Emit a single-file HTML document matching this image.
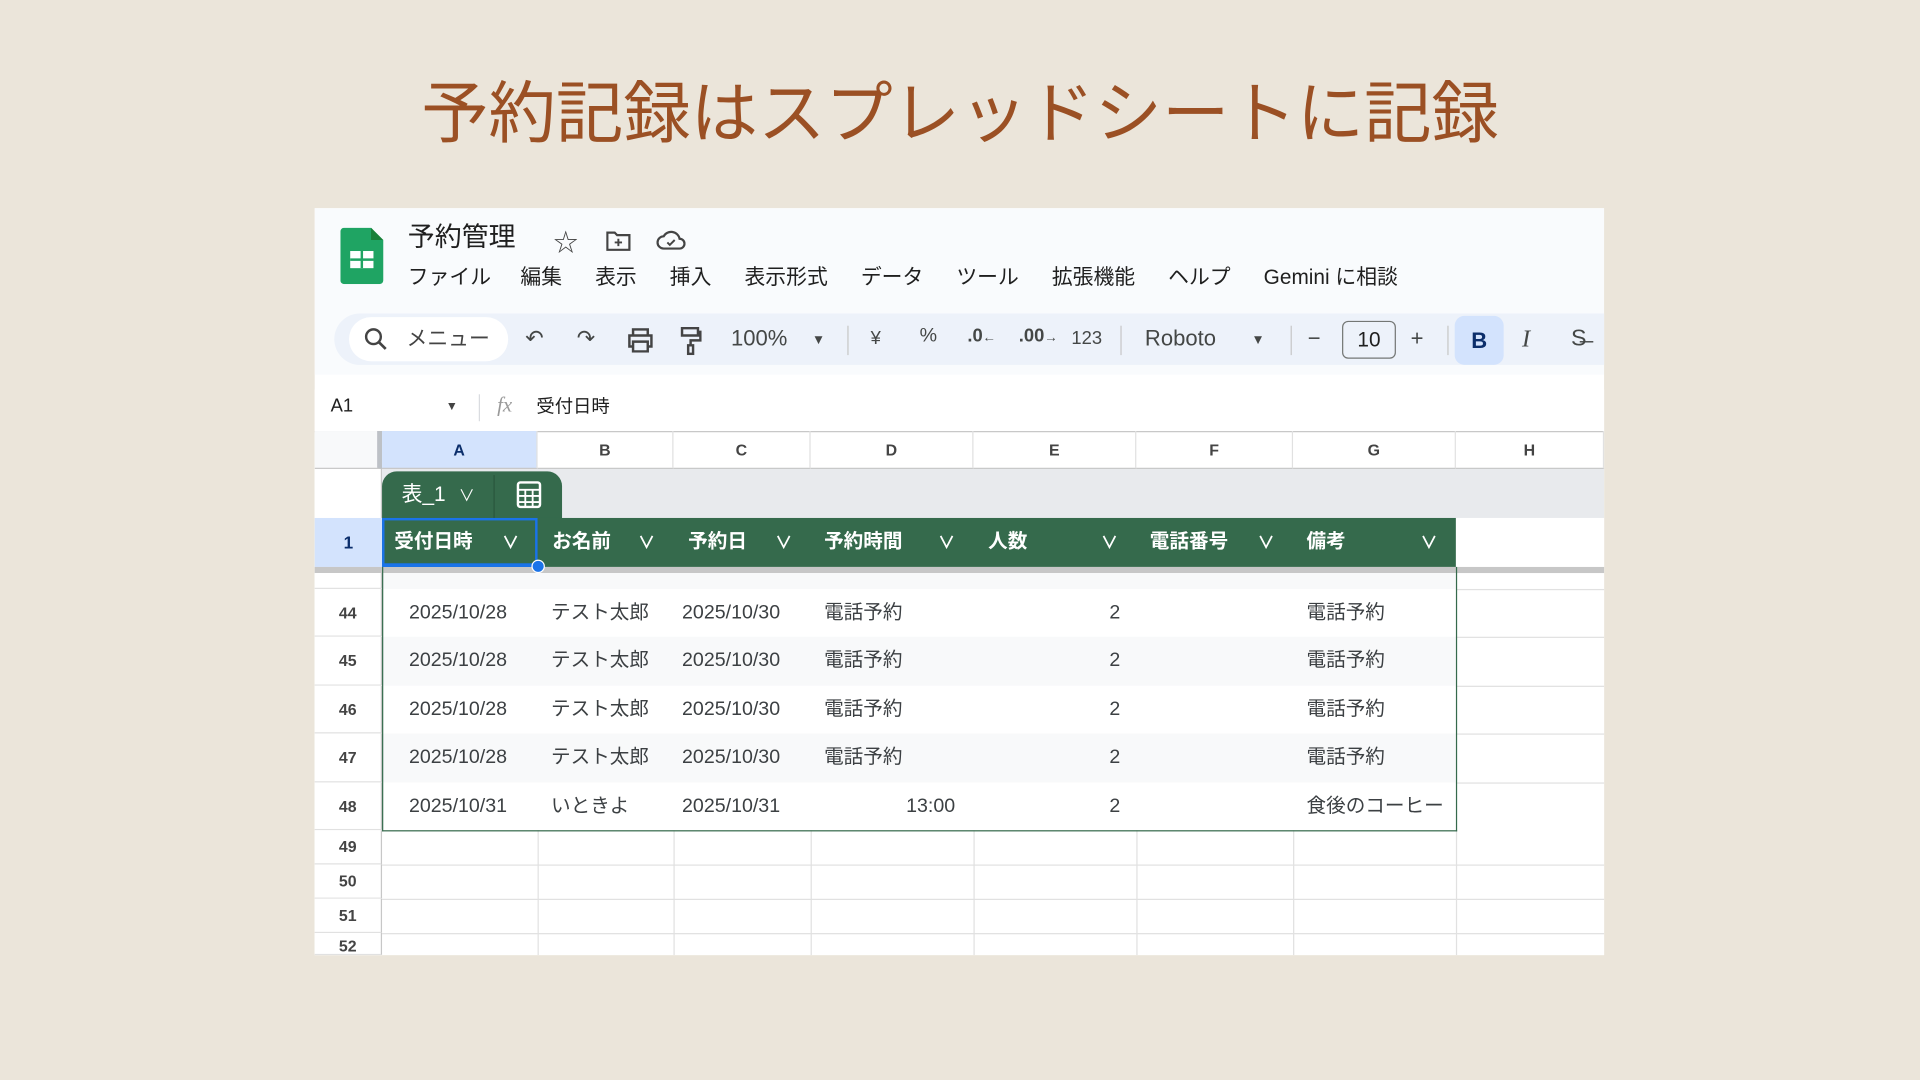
<!DOCTYPE html>
<html><head><meta charset="utf-8"><style>
*{margin:0;padding:0;box-sizing:border-box}
html,body{width:1920px;height:1080px;overflow:hidden;background:#ebe5da}
#w{position:absolute;left:0;top:0;width:1568px;height:882px;transform:scale(1.22449);transform-origin:0 0;font-family:"Liberation Sans","Noto Sans CJK JP",sans-serif;color:#3c4043}
.a{position:absolute;white-space:nowrap}
h1{position:absolute;left:0;width:1568px;top:48px;text-align:center;font-weight:400;font-size:55px;color:#9b5024;font-family:"Liberation Sans","Noto Sans CJK JP",sans-serif}
#sh{position:absolute;left:257px;top:170px;width:1053px;height:610px;background:#fff;overflow:hidden}
.menu span{margin-right:27px}
.tb{font-size:18px;color:#444746;position:absolute;top:266px}
.col{position:absolute;top:182px;height:31px;border-right:1px solid #e1e1e1;border-bottom:1px solid #c7c7c7;font-size:13px;font-weight:700;text-align:center;line-height:31px;color:#444}
.hrow{position:absolute;left:257px;width:55px;border-right:1px solid #c7c7c7;border-bottom:1px solid #e1e1e1;font-size:13px;font-weight:700;text-align:center;color:#444;background:#fff}
.hd{position:absolute;height:40px;line-height:40px;color:#fff;font-weight:700;font-size:16px}
.cell{position:absolute;font-size:16px;color:#3c4043;line-height:20px;white-space:nowrap}
.vl{position:absolute;width:1px;background:#e1e1e1}
.hl{position:absolute;height:1px;background:#e1e1e1}
</style></head><body><div id="w">
<h1>予約記録はスプレッドシートに記録</h1>
<div id="sh">
 <div class="a" style="left:0;top:0;width:1053px;height:136px;background:#f9fbfd"></div>
 <svg class="a" style="left:21px;top:16px" width="36" height="46" viewBox="0 0 36 46"><path d="M3 0H25L35 10V43a3 3 0 0 1-3 3H3a3 3 0 0 1-3-3V3a3 3 0 0 1 3-3z" fill="#1fa463"/><path d="M25 0L35 10H25z" fill="#188038"/><rect x="8" y="19" width="19" height="14" fill="#fff"/><path d="M8 26H27M17.5 19V33" stroke="#1fa463" stroke-width="2"/></svg>
 <div class="a" style="left:76px;top:9px;font-size:22px;color:#1f1f1f;line-height:30px">予約管理</div>
 <div class="a" style="left:195px;top:12px;font-size:20px;color:#444">☆</div>
 <svg class="a" style="left:238px;top:18px" width="20" height="17" viewBox="0 0 20 17"><path d="M1 2h6l2 2h10v12H1z" fill="none" stroke="#444" stroke-width="1.8"/><path d="M10 7v6M7 10h6" stroke="#444" stroke-width="1.6"/></svg>
 <svg class="a" style="left:279px;top:18px" width="24" height="17" viewBox="0 0 24 17"><path d="M6 15a5 5 0 0 1 0-10 7 7 0 0 1 13 2 4 4 0 0 1 0 8z" fill="none" stroke="#444" stroke-width="1.8"/><path d="M9 10l2 2 4-4" fill="none" stroke="#444" stroke-width="1.6"/></svg>
 <div class="a menu" style="left:76px;top:47px;font-size:17px;color:#1f1f1f;line-height:20px"><span style="margin-right:24px">ファイル</span><span>編集</span><span>表示</span><span>挿入</span><span>表示形式</span><span>データ</span><span>ツール</span><span>拡張機能</span><span>ヘルプ</span><span>Gemini に相談</span></div>
 <div class="a" style="left:16px;top:86px;width:1060px;height:42px;border-radius:21px;background:#edf2fa"></div>
 <div class="a" style="left:28px;top:89px;width:130px;height:36px;border-radius:18px;background:#fff"></div>
 <svg class="a" style="left:40px;top:97px" width="20" height="20" viewBox="0 0 20 20"><circle cx="8" cy="8" r="6" fill="none" stroke="#444" stroke-width="2"/><path d="M12.5 12.5L18 18" stroke="#444" stroke-width="2.2"/></svg>
 <div class="a" style="left:75px;top:97px;font-size:17px;color:#444;line-height:20px">メニュー</div>
</div>
<div class="tb" style="left:429px">↶</div><div class="tb" style="left:471px">↷</div>
<svg class="a" style="left:512px;top:268px" width="22" height="20" viewBox="0 0 22 20"><path d="M5 6V1h12v5M5 15H2V6h18v9h-3M5 11h12v8H5z" fill="none" stroke="#444" stroke-width="2"/></svg>
<svg class="a" style="left:555px;top:266px" width="18" height="24" viewBox="0 0 18 24"><path d="M2 2h13v6H2zM15 5h2v7H9v4M7 16h4v7H7z" fill="none" stroke="#444" stroke-width="2"/></svg>
<div class="tb" style="left:597px">100%</div><div class="tb" style="left:663px;font-size:11px;top:272px">▼</div>
<div class="a" style="left:692px;top:266px;width:1px;height:24px;background:#c7c7c7"></div>
<div class="tb" style="left:711px;font-size:15px;top:268px">¥</div><div class="tb" style="left:751px;font-size:16px">%</div>
<div class="tb" style="left:790px;font-size:15px;font-weight:700;top:266px">.0<span style="font-size:11px">←</span></div>
<div class="tb" style="left:832px;font-size:15px;font-weight:700;top:266px">.00<span style="font-size:11px">→</span></div>
<div class="tb" style="left:875px;font-size:15px;top:268px">123</div>
<div class="a" style="left:915px;top:266px;width:1px;height:24px;background:#c7c7c7"></div>
<div class="tb" style="left:935px">Roboto</div><div class="tb" style="left:1022px;font-size:11px;top:272px">▼</div>
<div class="a" style="left:1054px;top:266px;width:1px;height:24px;background:#c7c7c7"></div>
<div class="tb" style="left:1068px">−</div>
<div class="a" style="left:1096px;top:262px;width:44px;height:31px;border:1px solid #747775;border-radius:5px;text-align:center;line-height:29px;font-size:17px;color:#1f1f1f">10</div>
<div class="tb" style="left:1152px">+</div>
<div class="a" style="left:1182px;top:266px;width:1px;height:24px;background:#c7c7c7"></div>
<div class="a" style="left:1188px;top:258px;width:40px;height:40px;border-radius:8px;background:#d3e3fd;text-align:center;line-height:40px;font-weight:700;font-size:18px;color:#0b2e6b">B</div>
<div class="tb" style="left:1243px;font-style:italic;font-family:'Liberation Serif',serif;font-size:20px">I</div>
<div class="tb" style="left:1283px;font-size:19px">S̶</div>
<div class="a" style="left:257px;top:318px;width:1053px;height:34px;background:#fff"></div>
<div class="a" style="left:270px;top:323px;font-size:15px;color:#1f1f1f">A1</div>
<div class="a" style="left:364px;top:327px;font-size:10px;color:#444">▼</div>
<div class="a" style="left:391px;top:322px;width:1px;height:22px;background:#dadce0"></div>
<div class="a" style="left:406px;top:321px;font-size:17px;font-style:italic;color:#999;font-family:'Liberation Serif',serif">fx</div>
<div class="a" style="left:438px;top:323px;font-size:15px;color:#1f1f1f;line-height:20px">受付日時</div>
<div class="a" style="left:257px;top:352px;width:1053px;height:428px;background:#fff;overflow:hidden">
 <div class="a" style="left:0;top:0;width:1053px;height:1px;background:#c7c7c7"></div>
 <div class="a" style="left:0;top:0;width:55px;height:31px;background:#f8f9fa;border-right:4px solid #bdc1c6;border-bottom:1px solid #c7c7c7"></div>
</div>
<div style="position:absolute;left:257px;top:170px">
 <div class="col" style="left:55px;width:127px;background:#d3e3fd;color:#0b2e6b">A</div>
 <div class="col" style="left:182px;width:111px">B</div>
 <div class="col" style="left:293px;width:112px">C</div>
 <div class="col" style="left:405px;width:133px">D</div>
 <div class="col" style="left:538px;width:133px">E</div>
 <div class="col" style="left:671px;width:128px">F</div>
 <div class="col" style="left:799px;width:133px">G</div>
 <div class="col" style="left:932px;width:121px">H</div>
</div>
<div class="a" style="left:257px;top:383px;width:55px;height:40px;background:#fff;border-right:1px solid #c7c7c7"></div>
<div class="a" style="left:312px;top:383px;width:998px;height:40px;background:#e8eaed"></div>
<div class="a" style="left:312px;top:385px;width:147px;height:38px;background:#356a4c;border-radius:12px 12px 0 0"></div>
<div class="a" style="left:403px;top:388px;width:1px;height:35px;background:#2a573d"></div>
<div class="a" style="left:328px;top:393px;font-size:17px;color:#fff;line-height:22px">表_1 <span style="font-size:13px;margin-left:6px">∨</span></div>
<svg class="a" style="left:421px;top:392px" width="22" height="24" viewBox="0 0 22 24"><rect x="2" y="2" width="18" height="20" rx="2" fill="none" stroke="#fff" stroke-width="2"/><path d="M2 8h18M2 13h18M2 18h18M8 8v14M14 8v14" stroke="#fff" stroke-width="1.5"/></svg>
<div class="a" style="left:257px;top:423px;width:55px;height:40px;background:#d3e3fd;text-align:center;line-height:40px;font-size:14px;font-weight:700;color:#0b2e6b">1</div>
<div class="a" style="left:312px;top:423px;width:877px;height:40px;background:#356a4c"></div>
<div class="a" style="left:312px;top:423px;width:127px;height:40px;border:2px solid #1a73e8"></div>
<div class="a" style="left:1189px;top:423px;width:121px;height:40px;background:#fff"></div>
<div class="hd" style="left:322px;top:423px">受付日時</div><div class="hd" style="left:410px;top:423px;font-size:14px">∨</div>
<div class="hd" style="left:451px;top:423px">お名前</div><div class="hd" style="left:521px;top:423px;font-size:14px">∨</div>
<div class="hd" style="left:562px;top:423px">予約日</div><div class="hd" style="left:633px;top:423px;font-size:14px">∨</div>
<div class="hd" style="left:673px;top:423px">予約時間</div><div class="hd" style="left:766px;top:423px;font-size:14px">∨</div>
<div class="hd" style="left:807px;top:423px">人数</div><div class="hd" style="left:899px;top:423px;font-size:14px">∨</div>
<div class="hd" style="left:939px;top:423px">電話番号</div><div class="hd" style="left:1027px;top:423px;font-size:14px">∨</div>
<div class="hd" style="left:1067px;top:423px">備考</div><div class="hd" style="left:1160px;top:423px;font-size:14px">∨</div>
<div class="a" style="left:257px;top:463px;width:1053px;height:5px;background:#c7c7c7"></div>
<div class="a" style="left:312px;top:460px;width:127px;height:3px;background:#1a73e8"></div>
<div class="a" style="left:434px;top:457px;width:11px;height:11px;border-radius:50%;background:#1a73e8;border:1px solid #fff"></div>
<div class="a" style="left:312px;top:468px;width:877px;height:13px;background:#f8f9fa"></div>
<div class="a" style="left:312px;top:520px;width:877px;height:40px;background:#f8f9fa"></div>
<div class="a" style="left:312px;top:599px;width:877px;height:40px;background:#f8f9fa"></div>
<div class="hrow" style="top:468px;height:13px"></div>
<div class="hrow" style="top:481px;height:39px;line-height:39px">44</div>
<div class="hrow" style="top:520px;height:40px;line-height:40px">45</div>
<div class="hrow" style="top:560px;height:39px;line-height:39px">46</div>
<div class="hrow" style="top:599px;height:40px;line-height:40px">47</div>
<div class="hrow" style="top:639px;height:39px;line-height:39px">48</div>
<div class="hrow" style="top:678px;height:28px;line-height:28px">49</div>
<div class="hrow" style="top:706px;height:28px;line-height:28px">50</div>
<div class="hrow" style="top:734px;height:28px;line-height:28px">51</div>
<div class="hrow" style="top:762px;height:18px;line-height:22px;overflow:hidden">52</div>
<div class="hl" style="left:1189px;top:481px;width:121px"></div>
<div class="hl" style="left:1189px;top:520px;width:121px"></div>
<div class="hl" style="left:1189px;top:560px;width:121px"></div>
<div class="hl" style="left:1189px;top:599px;width:121px"></div>
<div class="hl" style="left:1189px;top:639px;width:121px"></div>
<div class="hl" style="left:312px;top:706px;width:998px"></div>
<div class="hl" style="left:312px;top:734px;width:998px"></div>
<div class="hl" style="left:312px;top:762px;width:998px"></div>
<div class="vl" style="left:439px;top:678px;height:102px"></div>
<div class="vl" style="left:550px;top:678px;height:102px"></div>
<div class="vl" style="left:662px;top:678px;height:102px"></div>
<div class="vl" style="left:795px;top:678px;height:102px"></div>
<div class="vl" style="left:928px;top:678px;height:102px"></div>
<div class="vl" style="left:1056px;top:678px;height:102px"></div>
<div class="vl" style="left:1189px;top:678px;height:102px"></div>
<div class="a" style="left:312px;top:463px;width:878px;height:216px;border:1.5px solid #356a4c;border-top:none"></div>
<div class="cell" style="left:334px;top:491px">2025/10/28</div><div class="cell" style="left:450px;top:491px">テスト太郎</div><div class="cell" style="left:557px;top:491px">2025/10/30</div><div class="cell" style="left:673px;top:491px">電話予約</div><div class="cell" style="left:906px;top:491px">2</div><div class="cell" style="left:1067px;top:491px">電話予約</div>
<div class="cell" style="left:334px;top:530px">2025/10/28</div><div class="cell" style="left:450px;top:530px">テスト太郎</div><div class="cell" style="left:557px;top:530px">2025/10/30</div><div class="cell" style="left:673px;top:530px">電話予約</div><div class="cell" style="left:906px;top:530px">2</div><div class="cell" style="left:1067px;top:530px">電話予約</div>
<div class="cell" style="left:334px;top:570px">2025/10/28</div><div class="cell" style="left:450px;top:570px">テスト太郎</div><div class="cell" style="left:557px;top:570px">2025/10/30</div><div class="cell" style="left:673px;top:570px">電話予約</div><div class="cell" style="left:906px;top:570px">2</div><div class="cell" style="left:1067px;top:570px">電話予約</div>
<div class="cell" style="left:334px;top:609px">2025/10/28</div><div class="cell" style="left:450px;top:609px">テスト太郎</div><div class="cell" style="left:557px;top:609px">2025/10/30</div><div class="cell" style="left:673px;top:609px">電話予約</div><div class="cell" style="left:906px;top:609px">2</div><div class="cell" style="left:1067px;top:609px">電話予約</div>
<div class="cell" style="left:334px;top:649px">2025/10/31</div><div class="cell" style="left:450px;top:649px">いときよ</div><div class="cell" style="left:557px;top:649px">2025/10/31</div><div class="cell" style="left:740px;top:649px">13:00</div><div class="cell" style="left:906px;top:649px">2</div><div class="cell" style="left:1067px;top:649px;width:121px;overflow:hidden">食後のコーヒー</div>
</div></body></html>
